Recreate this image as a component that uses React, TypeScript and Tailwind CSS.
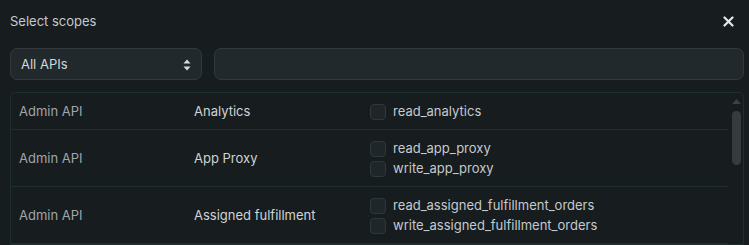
import React from "react";

const rows = [
  { api: "Admin API", name: "Analytics", scopes: ["read_analytics"] },
  { api: "Admin API", name: "App Proxy", scopes: ["read_app_proxy", "write_app_proxy"] },
  {
    api: "Admin API",
    name: "Assigned fulfillment",
    scopes: ["read_assigned_fulfillment_orders", "write_assigned_fulfillment_orders"],
  },
];

export default function App() {
  return (
    <div
      className="w-[749px] h-[245px] overflow-hidden bg-[#171c1f] text-[13px]"
      style={{ fontFamily: "Inter, 'Noto Sans', sans-serif" }}
    >
      <div className="flex items-center justify-between h-[41px] pt-[2px] pl-[10px] pr-[15px]">
        <span className="text-[#c5cacd] text-[13px]">Select scopes</span>
        <svg width="11" height="11" viewBox="0 0 11 11">
          <path d="M1.5 1.5 L9.5 9.5 M9.5 1.5 L1.5 9.5" stroke="#e6e8ea" strokeWidth="2.2" strokeLinecap="round" />
        </svg>
      </div>
      <div className="flex gap-[12px] pl-[10px] pr-[5px] mt-[7px]">
        <div className="w-[192px] h-[32px] rounded-[7px] bg-[#22292c] border border-[#31393c] flex items-center justify-between pt-[1px] pl-[10px] pr-[10px]">
          <span className="text-[#d3d7da]">All APIs</span>
          <svg width="8" height="12" viewBox="0 0 8 12">
            <path d="M4 0.5 L7.5 4.5 L0.5 4.5 Z M4 11.5 L7.5 7.5 L0.5 7.5 Z" fill="#d8dbdd" />
          </svg>
        </div>
        <div className="flex-1 h-[32px] rounded-[7px] bg-[#22292c] border border-[#31393c]" />
      </div>
      <div className="mt-[12px] ml-[10px] mr-[5px] flex border border-[#1f2d2d] rounded-tl-[5px] rounded-tr-[5px]">
        <div className="flex-1">
          {rows.map((r, i) => (
            <div key={i} className="flex items-center pt-[9px] pb-[7px] border-b border-[#1f2d2d]">
              <div className="w-[183px] pl-[8px] text-[#a0a6a9]">{r.api}</div>
              <div className="w-[176px] text-[#d0d4d6]">{r.name}</div>
              <div className="flex flex-col">
                {r.scopes.map((s) => (
                  <div key={s} className="flex items-center h-[20px]">
                    <div className="w-[16px] h-[16px] rounded-[4px] bg-[#1f2629] border border-[#30383b]" />
                    <span className="ml-[7px] text-[#c5cacd]">{s}</span>
                  </div>
                ))}
              </div>
            </div>
          ))}
        </div>
        <div className="w-[15px] flex flex-col items-center pt-[6px] pl-[2px]">
          <svg width="9" height="5" viewBox="0 0 9 5">
            <path d="M4.5 0 L9 5 L0 5 Z" fill="#3a4245" />
          </svg>
          <div className="mt-[7px] w-[9px] h-[54px] rounded-[5px] bg-[#353c3f]" />
        </div>
      </div>
    </div>
  );
}
